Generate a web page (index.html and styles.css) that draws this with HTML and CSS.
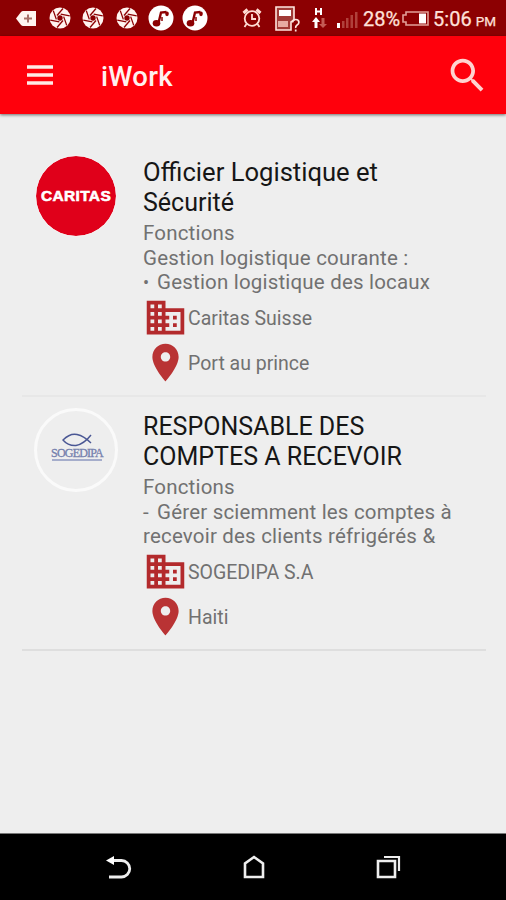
FILE: index.html
```
<!DOCTYPE html>
<html lang="fr">
<head>
<meta charset="utf-8">
<title>iWork</title>
<link rel="stylesheet" href="styles.css">
</head>
<body>
<svg class="defs" width="0" height="0">
  <symbol id="shutter" viewBox="0 0 22 22">
    <circle cx="11" cy="11" r="10.5" fill="#fff4f0"/>
    <g stroke="#8c0002" stroke-width="1.3" fill="none">
      <path d="M8 8.500 14 1.500"/>
      <path d="M8 8.500 14 1.500" transform="rotate(60 11 11)"/>
      <path d="M8 8.500 14 1.500" transform="rotate(120 11 11)"/>
      <path d="M8 8.500 14 1.500" transform="rotate(180 11 11)"/>
      <path d="M8 8.500 14 1.500" transform="rotate(240 11 11)"/>
      <path d="M8 8.500 14 1.500" transform="rotate(300 11 11)"/>
    </g>
    <circle cx="11" cy="11" r="2.7" fill="#8c0002"/>
  </symbol>
  <symbol id="music" viewBox="0 0 26 26">
    <circle cx="13" cy="13" r="12.5" fill="#fff"/>
    <path d="M10.500 18 13 7.500 18.500 7" fill="none" stroke="#8c0002" stroke-width="2.400"/>
    <ellipse cx="8.5" cy="18.2" rx="3.8" ry="3.2" fill="#8c0002"/>
    <ellipse cx="19" cy="8.8" rx="1.8" ry="2.4" fill="#8c0002"/>
    <path d="M14 12v4" stroke="#8c0002" stroke-width="1.500"/>
  </symbol>
  <symbol id="business" viewBox="0 0 24 24">
    <path d="M12 7V3H2v18h20V7H12zM6 19H4v-2h2v2zm0-4H4v-2h2v2zm0-4H4V9h2v2zm0-4H4V5h2v2zm4 12H8v-2h2v2zm0-4H8v-2h2v2zm0-4H8V9h2v2zm0-4H8V5h2v2zm10 12h-8v-2h2v-2h-2v-2h2v-2h-2V9h8v10zm-2-8h-2v2h2v-2zm0 4h-2v2h2v-2z"/>
  </symbol>
  <symbol id="place" viewBox="0 0 24 24">
    <path d="M12 2C8.13 2 5 5.13 5 9c0 5.25 7 13 7 13s7-7.75 7-13c0-3.87-3.13-7-7-7zm0 9.5c-1.38 0-2.5-1.12-2.5-2.5s1.12-2.5 2.5-2.5 2.5 1.12 2.5 2.5-1.12 2.5-2.5 2.5z"/>
  </symbol>
</svg>

<header class="status">
  <div class="notifications">
    <svg class="tag" width="20" height="15" viewBox="0 0 20 15"><path d="M0 7.5 5 1Q6 0 7 0H20V15H7Q6 15 5 14Z" fill="#fff4f0"/><path d="M12 3.5v8M8 7.5h8" stroke="#a77069" stroke-width="2"/></svg>
    <svg class="shutter"><use href="#shutter"/></svg>
    <svg class="shutter"><use href="#shutter"/></svg>
    <svg class="shutter"><use href="#shutter"/></svg>
    <svg class="music"><use href="#music"/></svg>
    <svg class="music"><use href="#music"/></svg>
  </div>
  <div class="system">
    <svg class="alarm" width="20" height="20" viewBox="0 0 20 20" fill="none" stroke="#ffdcd4" stroke-width="1.8"><circle cx="10" cy="10.5" r="7.3"/><path d="M10 6v5h4M4.500 16 2.500 19M15.500 16l2 3"/><path d="M1.500 5 5.500 1.500M18.500 5 14.500 1.500" stroke-width="3"/></svg>
    <svg class="sim" width="25" height="27" viewBox="0 0 25 27"><path d="M1 2h18v13l-3 2v8H1Z" fill="#a13a36" stroke="#ffe5df" stroke-width="1.6"/><path d="M4 5h12v6H4Z" fill="#fff"/><path d="M3 16h10v6H3Z" fill="#e6aaa2"/><path d="M17.500 17.500q0-3 3.200-3t3.200 2.700q0 1.700-1.800 2.800t-1.400 3M20.700 24.500v2" fill="none" stroke="#ffe5df" stroke-width="1.7"/></svg>
    <svg class="data" width="15" height="22" viewBox="0 0 15 22"><path d="M4 1v7M9 1v7M4 4.500h5" stroke="#fff" stroke-width="2"/><path d="M0 15 4 10l4 5H5.500v6h-3v-6Z" fill="#fff"/><path d="M9.500 11h3v6H15l-4 4-4-4h2.500Z" fill="#c45b55"/></svg>
    <svg class="signal" width="21" height="17" viewBox="0 0 21 17"><path d="M0 12h3v5H0Z" fill="#fff"/><path d="M5 10h2.500v7H5ZM9 7h2.500v10H9ZM13.500 4H16v13h-2.500ZM18 1h2.500v16H18Z" fill="#b0403b"/></svg>
    <span class="percent">28%</span>
    <svg class="battery" width="27" height="15" viewBox="0 0 27 15"><path d="M4 1h22v13H4v-3H1V4h3Z" fill="none" stroke="#e2a099" stroke-width="1.6"/><path d="M17 2.500h7v10h-7Z" fill="#fff"/></svg>
    <span class="clock">5:06</span>
    <span class="pm">PM</span>
  </div>
</header>

<nav class="appbar">
  <svg class="menu" width="26" height="20" viewBox="0 0 26 20" stroke="#ffe9e6" stroke-width="3.400"><path d="M0 2h26M0 10h26M0 18h26"/></svg>
  <h1>iWork</h1>
  <svg class="search" width="45" height="45" viewBox="0 0 24 24"><path fill="#ffd3d0" d="M15.500 14h-.79l-.28-.27C15.410 12.590 16 11.110 16 9.500 16 5.910 13.090 3 9.500 3S3 5.910 3 9.500 5.910 16 9.500 16c1.610 0 3.090-.59 4.230-1.570l.27.28v.79l5 4.990L20.490 19l-4.990-5zm-6 0C7.010 14 5 11.990 5 9.500S7.010 5 9.500 5 14 7.010 14 9.500 11.990 14 9.500 14z"/></svg>
</nav>

<main>
  <article class="job">
    <div class="logo caritas">CARITAS</div>
    <div class="info">
      <h2><span class="wide">Officier Logistique et</span><br>Sécurité</h2>
      <p>Fonctions<br>Gestion logistique courante :<br><span class="bullet">•</span>Gestion logistique des locaux</p>
      <div class="meta"><svg><use href="#business"/></svg><span>Caritas Suisse</span></div>
      <div class="meta pin"><svg><use href="#place"/></svg><span>Port au prince</span></div>
    </div>
  </article>
  <article class="job last">
    <div class="logo sogedipa">
      <svg width="30" height="14" viewBox="0 0 30 14" fill="none" stroke="#4a5794" stroke-width="1.400"><path d="M29 2Q22 11 14 12.500 6 13 1 7 8 0 15 1.500 22 3 29 10"/></svg>
      <span>SOGEDIPA</span>
      <i></i>
    </div>
    <div class="info">
      <h2>RESPONSABLE DES<br>COMPTES A RECEVOIR</h2>
      <p>Fonctions<br><span class="dash">-</span>Gérer sciemment les comptes à<br>recevoir des clients réfrigérés &amp;</p>
      <div class="meta"><svg><use href="#business"/></svg><span>SOGEDIPA S.A</span></div>
      <div class="meta pin"><svg><use href="#place"/></svg><span>Haiti</span></div>
    </div>
  </article>
</main>

<footer class="softkeys">
  <svg width="26" height="24" viewBox="0 0 26 24" fill="none" stroke="#eee" stroke-width="2.800"><path d="M7 5.500h8.500a8 8 0 0 1 0 16.500H3"/><path d="M0 5.500 8 1v9Z" fill="#fff" stroke="none"/></svg>
  <svg width="22" height="24" viewBox="0 0 22 24" fill="none" stroke="#eee" stroke-width="2.600"><path d="M2 22V8.500L11 2l9 6.500V22Z"/></svg>
  <svg width="25" height="24" viewBox="0 0 25 24" fill="none" stroke="#eee" stroke-width="2.600"><path d="M2 6h17v16H2Z"/><path d="M8 2h15v14" stroke-width="2.200"/></svg>
</footer>
</body>
</html>
```
FILE: styles.css
```
* { box-sizing: border-box; }

body {
  margin: 0;
  width: 506px;
  height: 900px;
  display: flex;
  flex-direction: column;
  overflow: hidden;
  background: #eee;
  font-family: Roboto, "Liberation Sans", sans-serif;
}

h1, h2, p { margin: 0; font-weight: 400; white-space: nowrap; }
svg { display: block; flex: none; }
.defs { display: none; }

.status {
  height: 36px;
  flex: none;
  display: flex;
  justify-content: space-between;
  align-items: center;
  padding: 0 10px 0 16px;
  background: #8c0002;
  color: #ffe1da;
}
.notifications, .system { display: flex; align-items: center; }
.shutter { width: 22px; height: 22px; margin-left: 11.700px; }
.tag + .shutter { margin-left: 12.500px; }
.music { width: 26px; height: 26px; margin-left: 8px; }
.shutter + .music { margin-left: 10px; }
.sim { margin-left: 13px; }
.data { margin-left: 12px; }
.signal { margin: 2px 5px 0 10px; }
.percent, .clock { font-size: 20px; line-height: 36px; padding-top: 2px; }
.percent, .clock, .pm { -webkit-text-stroke: .25px; }
.battery { margin: 0 4px 0 2px; }
.pm { font-size: 13.500px; padding: 6px 0 0 4px; }

.appbar {
  height: 78px;
  flex: none;
  display: flex;
  align-items: center;
  padding: 0 16.500px 0 27px;
  background: #ff000c;
  box-shadow: 0 1px 3px rgba(0, 0, 0, .55);
}
.appbar h1 {
  margin-left: 48px;
  padding-top: 3px;
  font-size: 27.500px;
  font-weight: 500;
  line-height: 32px;
  letter-spacing: .25px;
  color: #fff0ef;
}
.search { margin-left: auto; }

main { flex: 1; padding: 29px 20px 0 22px; }
.job {
  height: 254px;
  display: flex;
  padding-top: 15px;
  border-bottom: 2px solid #e7e7e7;
}
.last { border-bottom-color: #dedede; }

.logo {
  width: 84px;
  height: 84px;
  flex: none;
  margin: -4px 25px 0 12px;
  border: 3px solid #fafafa;
  border-radius: 50%;
  display: flex;
  flex-direction: column;
  align-items: center;
  justify-content: center;
}
.caritas {
  width: 82px;
  height: 82px;
  margin: -3px 26px 0 13px;
  border: 1.500px solid #f5f0f0;
  background: #e0001a;
  background-clip: padding-box;
  color: #fff;
  font: 700 15.500px "Liberation Sans", sans-serif;
  letter-spacing: .35px;
  -webkit-text-stroke: .6px #fff;
}
.sogedipa { color: #7580ad; font: 12px "Liberation Serif", serif; }
.sogedipa svg { margin: -6px 0 0 2px; }
.sogedipa span { line-height: 12px; letter-spacing: -.8px; margin-left: 2px; -webkit-text-stroke: .3px; }
.sogedipa i { width: 50px; height: 2px; margin-left: 2px; background: #a5adcb; }

.info { flex: 1; }
h2 { font-size: 25px; line-height: 29.500px; color: #161616; }
.wide { font-size: 25.600px; line-height: 1; }
p { margin-top: 4px; font-size: 20.500px; line-height: 24.500px; letter-spacing: .19px; color: #717171; }
.bullet { display: inline-block; width: 14px; font-size: 18px; line-height: 1; }
.dash { display: inline-block; width: 14px; line-height: 1; }
.meta { height: 45px; display: flex; align-items: center; font-size: 19.500px; color: #717171; white-space: nowrap; }
.meta span { padding-top: 2px; }
.meta svg { width: 45px; height: 45px; margin: 0 .5px 0 -.5px; fill: #b32a2c; }
.pin svg { fill: #b93334; }

.softkeys {
  height: 67px;
  flex: none;
  display: flex;
  align-items: center;
  justify-content: space-between;
  padding: 0 105px 0 106px;
  background: #000;
  border-top: 1px solid #777;
}
```
